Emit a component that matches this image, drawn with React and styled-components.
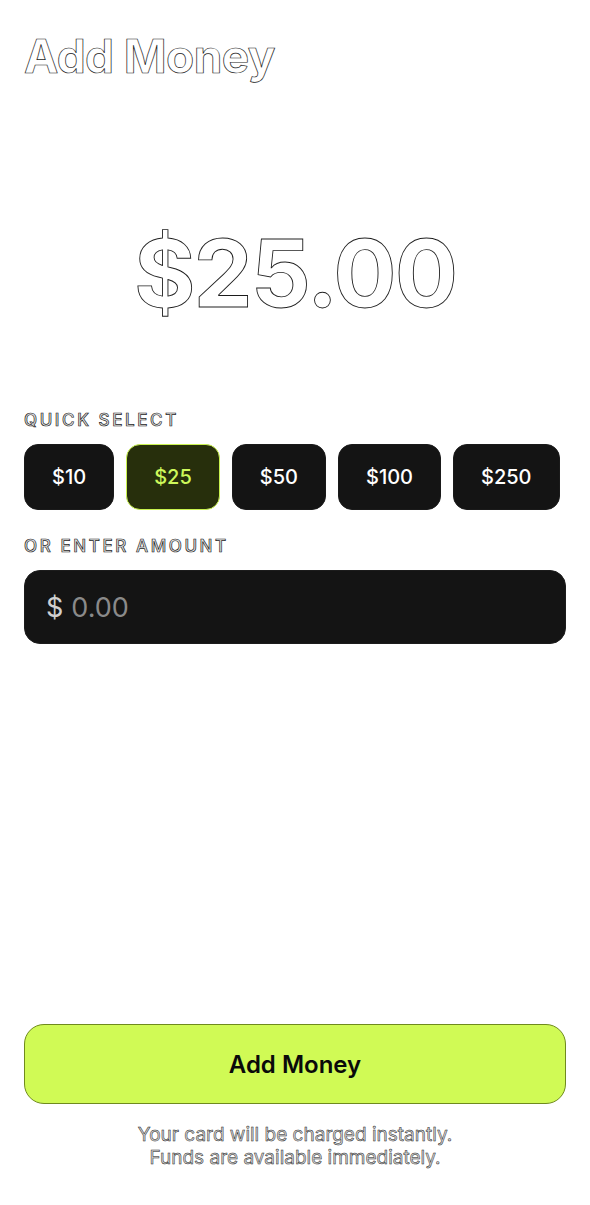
import React, { useState } from "react";
import styled, { createGlobalStyle, css } from "styled-components";

const Global = createGlobalStyle`
  html, body { margin: 0; padding: 0; background: #ffffff; }
  body {
    font-family: Inter, "Noto Sans", "Liberation Sans", sans-serif;
    -webkit-font-smoothing: antialiased;
  }
  * { box-sizing: border-box; }
`;

const outlined = css`
  color: #ffffff;
  -webkit-text-stroke: 0.7px #1c1c1c;
`;

const Page = styled.div`
  min-height: 1205px;
  display: flex;
  flex-direction: column;
  padding: 28px 24px 36px;
`;

const Title = styled.h1`
  ${outlined};
  margin: 0;
  font-size: 46px;
  font-weight: 700;
  letter-spacing: -0.6px;
  line-height: 56px;
`;

const AmountDisplay = styled.div`
  ${outlined};
  -webkit-text-stroke: 0.9px #1c1c1c;
  margin-top: 134px;
  text-align: center;
  font-size: 94px;
  font-weight: 700;
  letter-spacing: -2px;
  line-height: 110px;
`;

const Label = styled.div`
  ${outlined};
  color: #e8e8e8;
  font-size: 17px;
  font-weight: 500;
  letter-spacing: 2.6px;
  line-height: 20px;
  margin-top: ${(p) => p.$top}px;
`;

const ChipRow = styled.div`
  display: flex;
  gap: 12px;
  margin-top: 14px;
`;

const Chip = styled.button`
  height: 66px;
  padding: 0 27px;
  border-radius: 14px;
  font-family: inherit;
  font-size: 20px;
  font-weight: 500;
  cursor: pointer;
  border: 1px solid ${(p) => (p.$active ? "#c9f24f" : "#1a1a1a")};
  background: ${(p) => (p.$active ? "#272f0c" : "#141414")};
  color: ${(p) => (p.$active ? "#cdf85a" : "#ffffff")};
`;

const InputBox = styled.label`
  display: flex;
  align-items: center;
  gap: 8px;
  height: 74px;
  margin-top: 14px;
  padding: 0 21px;
  border-radius: 16px;
  background: #141414;
  border: 1px solid #1c1c1c;
`;

const Currency = styled.span`
  color: #d0d0d0;
  font-size: 27px;
  font-weight: 400;
`;

const AmountInput = styled.input`
  flex: 1;
  border: none;
  outline: none;
  background: transparent;
  font-family: inherit;
  font-size: 27px;
  color: #ffffff;
  padding: 0;
  &::placeholder { color: #8a8a8a; }
`;

const Spacer = styled.div`
  flex: 1;
`;

const PrimaryButton = styled.button`
  height: 80px;
  width: 100%;
  border-radius: 20px;
  border: 1px solid #6f8a1e;
  background: #d0fa55;
  color: #0a0a0a;
  font-family: inherit;
  font-size: 24px;
  font-weight: 600;
  cursor: pointer;
`;

const Note = styled.p`
  ${outlined};
  -webkit-text-stroke: 0.5px #222;
  color: #d8d8d8;
  margin: 19px 0 0;
  text-align: center;
  font-size: 19px;
  line-height: 23px;
`;

const presets = [10, 25, 50, 100, 250];

export default function App() {
  const [amount, setAmount] = useState(25);
  const [custom, setCustom] = useState("");
  const value = custom !== "" ? Number(custom) || 0 : amount;

  return (
    <>
      <Global />
      <Page>
        <Title>Add Money</Title>
        <AmountDisplay>${value.toFixed(2)}</AmountDisplay>
        <Label $top={82}>QUICK SELECT</Label>
        <ChipRow>
          {presets.map((p) => (
            <Chip
              key={p}
              $active={custom === "" && amount === p}
              onClick={() => {
                setAmount(p);
                setCustom("");
              }}
            >
              ${p}
            </Chip>
          ))}
        </ChipRow>
        <Label $top={26}>OR ENTER AMOUNT</Label>
        <InputBox>
          <Currency>$</Currency>
          <AmountInput
            placeholder="0.00"
            value={custom}
            onChange={(e) => setCustom(e.target.value)}
          />
        </InputBox>
        <Spacer />
        <PrimaryButton>Add Money</PrimaryButton>
        <Note>
          Your card will be charged instantly.
          <br />
          Funds are available immediately.
        </Note>
      </Page>
    </>
  );
}
